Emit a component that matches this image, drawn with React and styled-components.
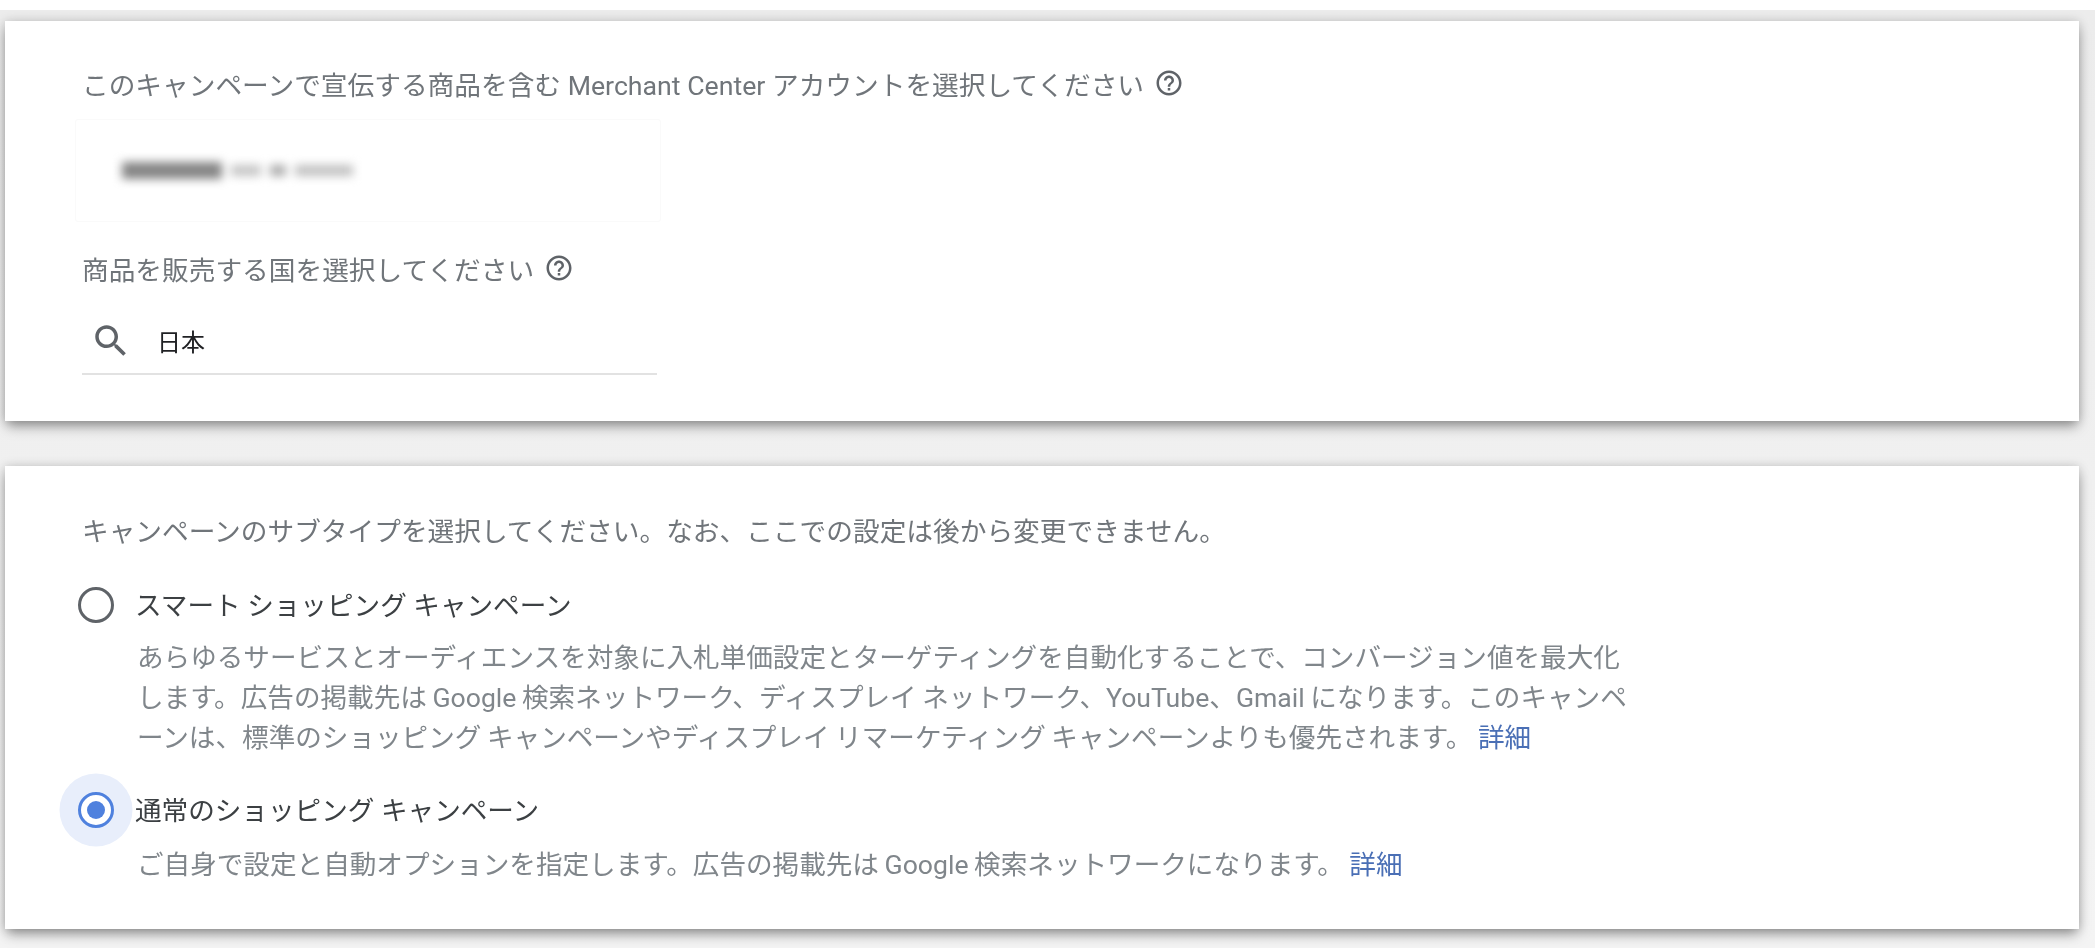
import React from 'react'
import styled, { createGlobalStyle } from 'styled-components'

const GlobalStyle = createGlobalStyle`
    html, body {
        margin: 0;
        background: #fff;
        font-family: Roboto, "Noto Sans CJK JP", sans-serif;
    }
`

const Page = styled.div`
    display: flex;
    flex-direction: column;
    gap: 45px;
    box-sizing: border-box;
    width: 2095px;
    height: 938px;
    margin-top: 10px;
    padding: 11px 16px 0 5px;
    background: linear-gradient(#ececec, #f4f4f4);
    overflow: hidden;
    filter: blur(0.5px);
`

const Card = styled.section`
    box-sizing: border-box;
    height: ${props => props.height}px;
    padding: ${props => props.top}px 0 0 77px;
    background: #fff;
    box-shadow: 0 7px 12px -2px rgba(0, 0, 0, 0.38), 0 0 10px rgba(0, 0, 0, 0.16);
`

const Prompt = styled.div`
    display: flex;
    align-items: center;
    gap: 10px;
    height: 40px;
    font-size: 26.7px;
    color: #70757a;
    white-space: nowrap;
`

const HelpIcon = styled.svg`
    width: 30px;
    height: 30px;
    fill: #5f6368;
    flex: none;
`

const RedactedField = styled.div`
    display: flex;
    align-items: center;
    box-sizing: border-box;
    width: 586px;
    height: 103px;
    margin: 16px 0 26px -7px;
    padding-left: 46px;
    border: 1px solid #fafafa;
    border-radius: 3px;
`

const Smudge = styled.div`
    display: flex;
    align-items: center;
    gap: 9px;
    filter: blur(5px);
`

const SmudgePart = styled.span`
    width: ${props => props.width}px;
    height: ${props => props.tall ? 17 : 11}px;
    background: ${props => props.shade};
`

const SearchField = styled.div`
    display: flex;
    align-items: center;
    gap: 25px;
    box-sizing: border-box;
    width: 575px;
    height: 67px;
    margin-top: 20px;
    padding-left: 8px;
    border-bottom: 2px solid #e2e2e2;
    font-size: 24px;
    color: #202124;
`

const SearchIcon = styled.svg`
    width: 42px;
    height: 42px;
    fill: #5f6368;
    flex: none;
`

const Option = styled.div`
    display: flex;
    align-items: center;
    gap: 21px;
    height: 40px;
    margin: ${props => props.gap}px 0 0 -4px;
`

const Radio = styled.span`
    display: flex;
    align-items: center;
    justify-content: center;
    flex: none;
    box-sizing: border-box;
    width: 36px;
    height: 36px;
    border: 3.5px solid ${props => props.checked ? '#4f81de' : '#5f6368'};
    border-radius: 50%;
    background: #fff;
    box-shadow: ${props => props.checked ? '0 0 0 18.5px #e8eefb' : 'none'};

    ${props => props.checked && `
        &::after {
            content: "";
            width: 18px;
            height: 18px;
            border-radius: 50%;
            background: #4f81de;
        }
    `}
`

const OptionLabel = styled.span`
    position: relative;
    margin-top: -4px;
    font-size: 26.6px;
    color: #3c4043;
    white-space: nowrap;
`

const Description = styled.p`
    margin: ${props => props.gap}px 0 0 55px;
    font-size: 26.6px;
    line-height: 40px;
    word-spacing: -1px;
    color: #80868b;
    white-space: nowrap;
`

const MoreLink = styled.a`
    color: #4a6fb5;
    text-decoration: none;
`

const HelpGlyph = () => (
    <HelpIcon viewBox="0 0 24 24">
        <path d="M11 18h2v-2h-2v2zm1-16C6.48 2 2 6.48 2 12s4.48 10 10 10 10-4.48 10-10S17.52 2 12 2zm0 18c-4.41 0-8-3.59-8-8s3.59-8 8-8 8 3.59 8 8-3.59 8-8 8zm0-14c-2.21 0-4 1.79-4 4h2c0-1.1.9-2 2-2s2 .9 2 2c0 2-3 1.75-3 5h2c0-2.25 3-2.5 3-5 0-2.21-1.79-4-4-4z" />
    </HelpIcon>
)

export default function App() {
    return (
        <>
            <GlobalStyle />
            <Page>
                <Card height={400} top={42}>
                    <Prompt>
                        このキャンペーンで宣伝する商品を含む Merchant Center アカウントを選択してください
                        <HelpGlyph />
                    </Prompt>
                    <RedactedField>
                        <Smudge>
                            <SmudgePart width={100} tall shade="#858585" />
                            <SmudgePart width={30} shade="#c4c4c4" />
                            <SmudgePart width={16} shade="#aaa" />
                            <SmudgePart width={58} shade="#c0c0c0" />
                        </Smudge>
                    </RedactedField>
                    <Prompt>
                        商品を販売する国を選択してください
                        <HelpGlyph />
                    </Prompt>
                    <SearchField>
                        <SearchIcon viewBox="0 0 24 24">
                            <path d="M15.5 14h-.79l-.28-.27C15.41 12.59 16 11.11 16 9.5 16 5.91 13.09 3 9.5 3S3 5.91 3 9.5 5.91 16 9.5 16c1.61 0 3.09-.59 4.23-1.57l.27.28v.79l5 4.99L20.49 19l-4.99-5zm-6 0C7.01 14 5 11.99 5 9.5S7.01 5 9.5 5 14 7.01 14 9.5 11.99 14 9.5 14z" />
                        </SearchIcon>
                        日本
                    </SearchField>
                </Card>
                <Card height={463} top={43}>
                    <Prompt>キャンペーンのサブタイプを選択してください。なお、ここでの設定は後から変更できません。</Prompt>
                    <Option gap={36}>
                        <Radio />
                        <OptionLabel>スマート ショッピング キャンペーン</OptionLabel>
                    </Option>
                    <Description gap={13}>
                        あらゆるサービスとオーディエンスを対象に入札単価設定とターゲティングを自動化することで、コンバージョン値を最大化<br />
                        します。広告の掲載先は Google 検索ネットワーク、ディスプレイ ネットワーク、YouTube、Gmail になります。このキャンペ<br />
                        ーンは、標準のショッピング キャンペーンやディスプレイ リマーケティング キャンペーンよりも優先されます。 <MoreLink href="#">詳細</MoreLink>
                    </Description>
                    <Option gap={32}>
                        <Radio checked />
                        <OptionLabel>通常のショッピング キャンペーン</OptionLabel>
                    </Option>
                    <Description gap={15}>
                        ご自身で設定と自動オプションを指定します。広告の掲載先は Google 検索ネットワークになります。 <MoreLink href="#">詳細</MoreLink>
                    </Description>
                </Card>
            </Page>
        </>
    )
}
